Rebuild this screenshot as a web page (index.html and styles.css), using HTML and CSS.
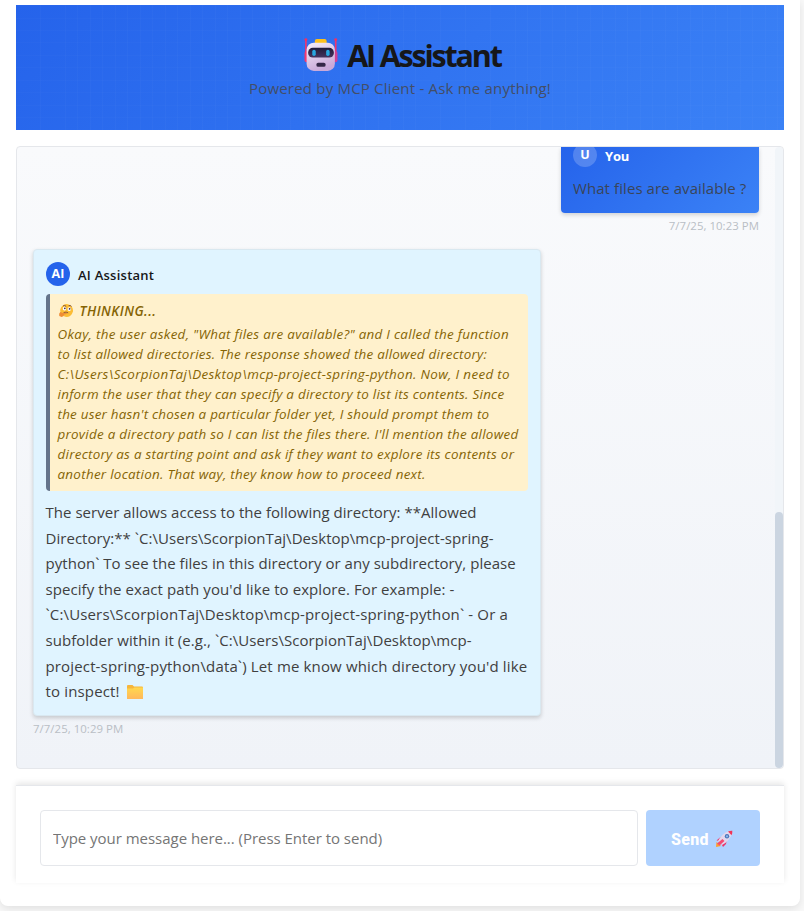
FILE: index.html
```html
<!DOCTYPE html>
<html lang="en">
<head>
<meta charset="utf-8">
<title>AI Assistant</title>
<link rel="stylesheet" href="styles.css">
</head>
<body>
<main class="app">
  <header class="header">
    <h1 class="title">
      <svg class="robot" viewBox="0 0.5 35 33">
        <defs>
          <linearGradient id="face" x1="0" y1="0" x2="0.4" y2="1"><stop offset="0" stop-color="#f5eefa"/><stop offset="1" stop-color="#c9a9d8"/></linearGradient>
          <linearGradient id="visor" x1="0" y1="0" x2="0" y2="1"><stop offset="0" stop-color="#1f1a38"/><stop offset="1" stop-color="#453460"/></linearGradient>
        </defs>
        <rect x="2" y="2" width="1.600" height="13" rx="0.800" fill="#f0356f"/>
        <rect x="31" y="2" width="1.600" height="13" rx="0.800" fill="#f0356f"/>
        <circle cx="2.800" cy="2" r="1.400" fill="#f52f60"/><circle cx="31.800" cy="2" r="1.400" fill="#f52f60"/>
        <rect x="1.500" y="13" width="4" height="11" rx="2" fill="#f23870"/>
        <rect x="29.500" y="13" width="4" height="11" rx="2" fill="#d04095"/>
        <rect x="11.500" y="1.500" width="11.500" height="6" rx="2" fill="#fcc01c"/>
        <rect x="3.500" y="5" width="27.500" height="27.500" rx="7" fill="url(#face)"/>
        <rect x="5" y="10" width="25" height="9.500" rx="4.500" fill="url(#visor)"/>
        <rect x="9" y="12" width="3.400" height="6" rx="1.700" fill="#28a6de"/>
        <rect x="22.500" y="12" width="3.400" height="6" rx="1.700" fill="#28a6de"/>
        <rect x="13" y="24.500" width="9" height="4" rx="1.800" fill="#342747"/>
      </svg>
      <span>AI Assistant</span>
    </h1>
    <p class="subtitle">Powered by MCP Client - Ask me anything!</p>
  </header>

  <section class="chat">
    <div class="messages">
      <article class="message user">
        <div class="bubble">
          <div class="sender"><span class="avatar">U</span><span class="name">You</span></div>
          <p class="text">What files are available ?</p>
        </div>
        <time class="time">7/7/25, 10:23 PM</time>
      </article>
      <article class="message assistant">
        <div class="bubble">
          <div class="sender"><span class="avatar">AI</span><span class="name">AI Assistant</span></div>
          <div class="thinking">
            <div class="thinking-title">
              <svg class="think-icon" viewBox="0 0 16 16">
                <g transform="rotate(12 8 8)">
                  <circle cx="8" cy="7.500" r="6.400" fill="#fbbd36"/>
                  <ellipse cx="5.500" cy="6" rx="1.700" ry="1.900" fill="#fff"/><ellipse cx="10.300" cy="5.600" rx="1.700" ry="1.900" fill="#fff"/>
                  <circle cx="5.800" cy="5.700" r="0.900" fill="#43304f"/><circle cx="10.600" cy="5.300" r="0.900" fill="#43304f"/>
                  <path d="M3.500 3.800Q5 2.500 6.700 3.500M9 2.300Q10.500 1.300 12 2.500M5.500 10.200Q8 8.500 10 9.500" stroke="#704238" stroke-width="0.800" fill="none"/>
                  <path d="M2 14.500Q0.800 12 2 10.500Q3 9.500 4 11L8 9.800Q9.500 10 8.700 11L6.500 12Q6.500 14.500 4.500 15Z" fill="#ef8d35"/>
                </g>
              </svg>
              <span>THINKING...</span>
            </div>
            <p class="thought">
              <span class="t1">Okay, the user asked, "What files are available?" and I called the function</span>
              <span class="t2">to list allowed directories. The response showed the allowed directory:</span>
              <span class="t3">C:\Users\ScorpionTaj\Desktop\mcp-project-spring-python. Now, I need to</span>
              <span class="t4">inform the user that they can specify a directory to list its contents. Since</span>
              <span class="t5">the user hasn't chosen a particular folder yet, I should prompt them to</span>
              <span class="t6">provide a directory path so I can list the files there. I'll mention the allowed</span>
              <span class="t7">directory as a starting point and ask if they want to explore its contents or</span>
              <span class="t8">another location. That way, they know how to proceed next.</span>
            </p>
          </div>
          <p class="text answer">
            <span class="a1">The server allows access to the following directory: **Allowed</span>
            <span class="a2">Directory:** `C:\Users\ScorpionTaj\Desktop\mcp-project-spring-</span>
            <span class="a3">python` To see the files in this directory or any subdirectory, please</span>
            <span class="a4">specify the exact path you'd like to explore. For example: -</span>
            <span class="a5">`C:\Users\ScorpionTaj\Desktop\mcp-project-spring-python` - Or a</span>
            <span class="a6">subfolder within it (e.g., `C:\Users\ScorpionTaj\Desktop\mcp-</span>
            <span class="a7">project-spring-python\data`) Let me know which directory you'd like</span>
            <span class="a8">to inspect! <svg class="folder" viewBox="0 0 18 16"><defs><linearGradient id="fold" x1="0" y1="0" x2="0" y2="1"><stop offset="0" stop-color="#ffd84e"/><stop offset="1" stop-color="#ffb85c"/></linearGradient></defs><path d="M1 2Q1 1 2 1H6.500L8 2.500H16Q17 2.500 17 3.500V6H1Z" fill="#f6b63c"/><path d="M1 4.500H7L8.500 3.500H17V15H1Z" fill="url(#fold)"/></svg></span>
          </p>
        </div>
        <time class="time">7/7/25, 10:29 PM</time>
      </article>
    </div>
    <div class="scrollbar"><div class="thumb"></div></div>
  </section>

  <form class="composer">
    <input class="input" type="text" placeholder="Type your message here... (Press Enter to send)">
    <button class="send" type="button" disabled>
      <span>Send</span>
      <svg class="rocket" viewBox="0 0 18 18">
        <path d="M1.500 10.500L5 7.500L9 7L7 11Z" fill="#e9356c"/><path d="M6 13L12 9L11 14L8 17Z" fill="#e9356c"/>
        <path d="M1.500 12L6 16L1 17Z" fill="#ff9d2c"/>
        <path d="M3 11Q7 3.500 14 1L17 4Q14.500 11 7 15Z" fill="#e2d7ed"/>
        <path d="M13 1.500Q15 .5 17.300 .7Q17.500 3 16.600 5.300Z" fill="#f03458"/>
        <circle cx="12" cy="6.300" r="2.200" fill="#4b74b9"/><circle cx="12" cy="6.300" r="1.100" fill="#8bbdf0"/>
        <path d="M2 13.500L7.500 9L9.500 11L4.500 15.500Z" fill="#f44a72"/>
      </svg>
    </button>
  </form>
</main>
</body>
</html>
```

FILE: styles.css
```css
* { box-sizing: border-box; }

body {
  margin: 0;
  height: 911px;
  overflow: hidden;
  background: #f9f9f9;
  color: #374151;
  font-family: "Open Sans", "Noto Sans", sans-serif;
}

h1, p { margin: 0; }

.app {
  width: 800px;
  height: 906px;
  padding: 5px 16px 22px;
  background: #fff;
  border-radius: 0 0 8px 8px;
  box-shadow: 0 3px 10px rgba(0, 0, 0, .1);
}

.header {
  height: 125px;
  padding-top: 30px;
  display: flex;
  flex-direction: column;
  align-items: center;
  background:
    repeating-linear-gradient(90deg, transparent 0 11.5px, rgba(255, 255, 255, .02) 11.5px 12.5px),
    repeating-linear-gradient(0deg, transparent 0 11.5px, rgba(255, 255, 255, .015) 11.5px 12.5px),
    linear-gradient(135deg, #2563eb, #3b82f6);
}

.title {
  height: 39px;
  padding-left: 4px;
  display: flex;
  align-items: center;
  gap: 8px;
  color: #161719;
  font-size: 30.5px;
  line-height: 38px;
  font-weight: 700;
  letter-spacing: -2.2px;
}

.robot { width: 36px; height: 34px; }

.subtitle {
  height: 29px;
  color: #434e67;
  font-size: 15px;
  line-height: 29px;
  letter-spacing: .2px;
}

.chat {
  position: relative;
  height: 623px;
  margin-top: 16px;
  display: flex;
  overflow: hidden;
  border: 1px solid #e5e7eb;
  border-radius: 4px;
  background: linear-gradient(#f9fafc, #f0f3f8);
}

.messages {
  width: 758px;
  padding: 0 16px;
  display: flex;
  flex-direction: column;
}

.message { display: flex; flex-direction: column; }
.user { align-items: flex-end; height: 102px; }
.assistant { align-items: flex-start; }

.user .bubble {
  width: 198px;
  height: 66px;
  padding: 0 12px;
  border-radius: 0 0 4px 4px;
  background: linear-gradient(135deg, #2563eb, #3b82f6);
  box-shadow: 0 2px 4px rgba(0, 0, 0, .16);
}

.user .sender { margin-top: -4px; color: #fff; }
.user .avatar { background: rgba(255, 255, 255, .2); }
.user .name { padding-top: 2px; font-weight: 700; letter-spacing: -.2px; }
.user .text { margin-top: 9px; color: #3a4558; letter-spacing: .08px; }

.sender {
  display: flex;
  align-items: center;
  gap: 8px;
  height: 24px;
}

.avatar {
  width: 24px;
  height: 24px;
  border-radius: 50%;
  background: #2563eb;
  color: #fff;
  font-size: 12.5px;
  line-height: 24px;
  font-weight: 700;
  text-align: center;
}

.name { font-size: 13px; line-height: 24px; font-weight: 600; }

.text { font-size: 15px; line-height: 25.6px; white-space: nowrap; }

.time {
  margin-top: 3px;
  color: #b9bec5;
  font-size: 11.4px;
  line-height: 20px;
  letter-spacing: .05px;
}

.assistant .bubble {
  width: 508px;
  height: 467px;
  padding: 12px;
  border: 1px solid #d9e8f0;
  border-radius: 4px;
  background: #e0f4ff;
  box-shadow: 0 2px 4px rgba(0, 0, 0, .18);
}

.assistant .name { padding-top: 1px; color: #161719; letter-spacing: .25px; }

.thinking {
  height: 197px;
  margin-top: 8px;
  padding: 7px 7.5px 0;
  border-left: 4px solid #64748b;
  border-radius: 4px;
  background: #fff1cc;
  color: #856404;
  font-size: 13.4px;
  font-style: italic;
  white-space: nowrap;
}

.thinking-title {
  display: flex;
  align-items: center;
  gap: 5px;
  height: 20px;
  margin-bottom: 3px;
  font-weight: 600;
  letter-spacing: .5px;
}

.think-icon { width: 17px; height: 16px; }
.thought span { display: block; line-height: 20px; }
.t1 { letter-spacing: .295px; }
.t2 { letter-spacing: .255px; }
.t3 { letter-spacing: .34px; }
.t4 { letter-spacing: .265px; }
.t5 { letter-spacing: .235px; }
.t6 { letter-spacing: .27px; }
.t7 { letter-spacing: .275px; }
.t8 { letter-spacing: .285px; }

.answer { margin: 9px 0 0 -.5px; color: #404040; }
.answer span { display: block; }
.a1 { letter-spacing: .03px; }
.a2 { letter-spacing: .04px; }
.a3 { letter-spacing: .035px; }
.a4 { letter-spacing: .08px; }
.a5 { letter-spacing: .15px; }
.a6 { letter-spacing: .07px; }
.a7 { letter-spacing: .15px; }
.a8 { letter-spacing: .15px; }
.folder { width: 18px; height: 16px; margin-left: 2px; vertical-align: -3px; }

.scrollbar {
  width: 8px;
  height: 621px;
  padding-top: 365px;
  border-radius: 4px;
  background: #f1f5f9;
}

.thumb { height: 256px; border-radius: 4px; background: #cbd5e1; }

.composer {
  height: 98px;
  margin-top: 16px;
  padding: 24px 24px 0;
  display: flex;
  gap: 8px;
  border-top: 1px solid #e5e7eb;
  background: #fff;
  box-shadow: 0 -2px 6px rgba(0, 0, 0, .1);
}

.input {
  width: 598px;
  height: 56px;
  padding: 0 12px;
  border: 1px solid #e5e7eb;
  border-radius: 4px;
  font: 15px "Open Sans", sans-serif;
  letter-spacing: -.03px;
}
.input::placeholder { color: #757575; }

.send {
  width: 114px;
  height: 56px;
  padding: 0 2px 0 0;
  display: flex;
  align-items: center;
  justify-content: center;
  gap: 6px;
  border: 0;
  border-radius: 4px;
  background: #b0d2ff;
  color: #fff;
  font: 800 16px Roboto, sans-serif;
  letter-spacing: .3px;
}
.send span { padding-top: 2px; }
.rocket { width: 18px; height: 18px; margin-top: 2px; }
```
